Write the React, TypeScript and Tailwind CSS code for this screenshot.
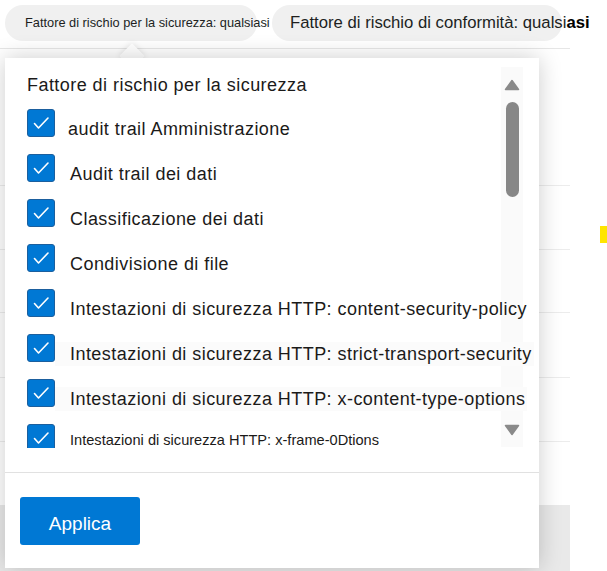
import React from 'react';

const items = [
  { label: 'audit trail Amministrazione', pad: 'pl-[13px]' },
  { label: 'Audit trail dei dati' },
  { label: 'Classificazione dei dati' },
  { label: 'Condivisione di file' },
  { label: 'Intestazioni di sicurezza HTTP: content-security-policy' },
  { label: 'Intestazioni di sicurezza HTTP: strict-transport-security', hover: true },
  { label: 'Intestazioni di sicurezza HTTP: x-content-type-options', hover: true },
];

const Check = () => (
  <span className="w-[28px] h-[28px] shrink-0 rounded-[3px] bg-[#0078d4] border border-[#1b5f9e] flex items-center justify-center">
    <svg width="26" height="26" viewBox="0 0 26 26" fill="none">
      <path d="M6.5 13.5 L10.5 18 L20 8" stroke="white" strokeWidth="1.6" strokeLinecap="round" strokeLinejoin="round" />
    </svg>
  </span>
);

export default function App() {
  return (
    <div className="relative w-[607px] h-[571px] bg-white overflow-hidden font-['Liberation_Sans',Arial,sans-serif] text-[#1b1a19]">
      <div className="flex">
        {/* Page behind the flyout */}
        <div className="w-[570px] flex flex-col h-[571px]">
          {/* Filter chips */}
          <div className="h-[49px] border-b border-[#e6e6e6] flex items-start pt-[5px] pl-[5px] gap-[15px]">
            <div className="h-[36px] w-[252px] rounded-full bg-[#f0f0f0] flex items-center pl-[20px] whitespace-nowrap overflow-visible">
              <span className="text-[12.8px] text-[#201f1e]">Fattore di rischio per la sicurezza: qualsiasi</span>
            </div>
            <div className="h-[36px] w-[290px] rounded-full bg-[#f0f0f0] flex items-center pl-[18px] whitespace-nowrap overflow-visible">
              <span className="text-[16.7px] text-[#201f1e]">
                Fattore di rischio di conformità: qualsi<span className="font-bold text-black">asi</span>
              </span>
            </div>
          </div>
          {/* Table rows */}
          <div className="h-[137px] border-b border-[#ececec]" />
          <div className="h-[64px] border-b border-[#ececec]" />
          <div className="h-[63px] border-b border-[#ececec]" />
          <div className="h-[65px] border-b border-[#ececec]" />
          <div className="h-[64px] border-b border-[#ececec]" />
          <div className="h-[63px]" />
          <div className="flex-1 bg-[#e9e9e9]" />
        </div>
        <div className="flex-1 pt-[226px] flex justify-end">
          <div className="w-[7px] h-[17px] bg-[#ffe500]" />
        </div>
      </div>

      {/* Beak */}
      <div className="absolute left-[123px] top-[47px] w-[18px] h-[18px] rotate-45 bg-white shadow-[0_0_6px_rgba(0,0,0,0.12)]" />

      {/* Flyout */}
      <div className="absolute left-[5px] top-[58px] w-[534px] h-[510px] bg-white shadow-[0_0_22px_rgba(0,0,0,0.2)] flex flex-col">
        {/* Scrollbar */}
        <div className="absolute right-[16px] top-[9px] w-[22px] h-[380px] bg-[#fafafa] flex flex-col items-center">
          <svg width="16" height="12" viewBox="0 0 16 12" className="mt-[12px]">
            <path d="M8 1.5 L14.5 10.5 H1.5 Z" fill="#8a8a8a" stroke="#8a8a8a" strokeWidth="1.5" strokeLinejoin="round" />
          </svg>
          <div className="mt-[11px] w-[13px] h-[95px] rounded-full bg-[#878787]" />
          <div className="flex-1" />
          <svg width="16" height="12" viewBox="0 0 16 12" className="mb-[11px]">
            <path d="M1.5 1.5 H14.5 L8 10.5 Z" fill="#8a8a8a" stroke="#8a8a8a" strokeWidth="1.5" strokeLinejoin="round" />
          </svg>
        </div>

        <div className="relative z-10 h-[414px] pl-[22px] pt-[16px]">
          <div className="text-[18px] tracking-[0.45px] leading-[22px] text-[#1b1a19]">Fattore di rischio per la sicurezza</div>
          <div className="mt-[13px] h-[339px] overflow-hidden">
            {items.map((it) => (
              <div key={it.label} className="h-[45px] flex items-start">
                <Check />
                <span
                  className={`${it.pad ?? 'pl-[15px]'} mt-[8px] text-[18px] tracking-[0.45px] leading-[24px] whitespace-nowrap ${
                    it.hover ? 'bg-[#fbfbfb] pr-[2px]' : ''
                  }`}
                >
                  {it.label}
                </span>
              </div>
            ))}
            <div className="h-[45px] flex items-start">
              <Check />
              <span className="pl-[15px] mt-[7px] text-[14.6px] leading-[18px] whitespace-nowrap">
                Intestazioni di sicurezza HTTP: x-frame-0Dtions
              </span>
            </div>
          </div>
        </div>

        <div className="border-t border-[#e1e1e1] flex-1 pl-[15px] pt-[24px]">
          <button className="w-[120px] h-[48px] rounded-[3px] bg-[#0078d4] text-white text-[19px] pt-[6px] flex items-center justify-center">
            Applica
          </button>
        </div>
      </div>
    </div>
  );
}
